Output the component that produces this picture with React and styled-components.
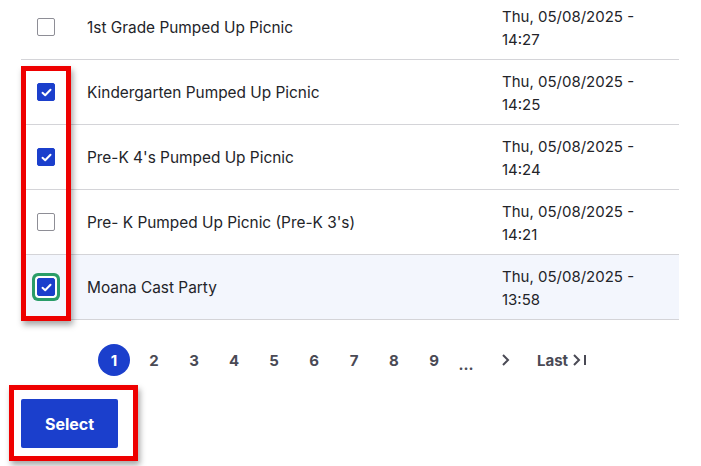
import React from "react";
import styled, { createGlobalStyle } from "styled-components";

const GlobalStyle = createGlobalStyle`
  body {
    margin: 0;
    background: #fff;
    font-family: Inter, "Liberation Sans", Arial, sans-serif;
    color: #232429;
    overflow: hidden;
  }
`;

const Page = styled.div`
  width: 701px;
  height: 466px;
  padding: 0 22px 0 21px;
  box-sizing: border-box;
  overflow: hidden;
`;

const TableWrap = styled.div`
  position: relative;
  margin-top: -5px;
`;

const Row = styled.div`
  display: grid;
  grid-template-columns: 50px 1fr 177px;
  align-items: center;
  height: 65px;
  border-bottom: 1px solid #d4d4d8;
  box-sizing: border-box;
  background: ${({ $active }) => ($active ? "#f3f6fd" : "#fff")};
`;

const CheckCell = styled.div`
  display: flex;
  justify-content: center;
`;

const Box = styled.span`
  display: flex;
  align-items: center;
  justify-content: center;
  width: 18px;
  height: 18px;
  box-sizing: border-box;
  border-radius: 2px;
  border: 1px solid ${({ $checked }) => ($checked ? "#1b3fcc" : "#8e8e96")};
  background: ${({ $checked }) => ($checked ? "#1b3fcc" : "#fff")};
  box-shadow: ${({ $focus }) => ($focus ? "0 0 0 2px #fff, 0 0 0 5px #2a9d68" : "none")};
`;

const Title = styled.div`
  padding: 1px 0 0 16px;
  font-size: 15.4px;
  line-height: 22px;
`;

const DateCell = styled.div`
  font-size: 15px;
  line-height: 23px;
  padding-top: 2px;
`;

const Highlight = styled.div`
  position: absolute;
  left: 0;
  top: 71px;
  width: 50px;
  height: 255px;
  box-sizing: border-box;
  border: 5px solid #ee0000;
  box-shadow: 2px 4px 6px rgba(0, 0, 0, 0.35);
  pointer-events: none;
`;

const Pager = styled.nav`
  display: flex;
  align-items: center;
  gap: 8px;
  margin: 24px 0 0 77px;
  height: 32px;
`;

const PageItem = styled.span`
  display: flex;
  align-items: center;
  justify-content: center;
  width: 32px;
  height: 32px;
  border-radius: 50%;
  font-size: 15px;
  font-weight: 700;
  color: ${({ $current }) => ($current ? "#fff" : "#4a4a55")};
  background: ${({ $current }) => ($current ? "#1b3fcc" : "transparent")};
`;

const Dots = styled(PageItem)`
  width: 16px;
  align-items: flex-end;
  padding-bottom: 2px;
  box-sizing: border-box;
`;

const NextItem = styled(PageItem)`
  margin-left: 7px;
`;

const LastLink = styled.span`
  display: flex;
  align-items: center;
  gap: 5px;
  margin-left: 8px;
  font-size: 15px;
  font-weight: 700;
  color: #4a4a55;
`;

const ButtonArea = styled.div`
  position: relative;
  margin-top: 23px;
`;

const Button = styled.button`
  width: 97px;
  height: 49px;
  border: none;
  border-radius: 2px;
  background: #1b3fcc;
  color: #fff;
  font-family: Inter, "Liberation Sans", Arial, sans-serif;
  font-size: 16px;
  font-weight: 700;
  cursor: pointer;
`;

const ButtonFrame = styled.div`
  position: absolute;
  left: -12px;
  top: -14px;
  width: 129px;
  height: 76px;
  box-sizing: border-box;
  border: 5px solid #ee0000;
  box-shadow: 2px 4px 6px rgba(0, 0, 0, 0.35);
  pointer-events: none;
`;

const Check = () => (
  <svg width="11" height="9" viewBox="0 0 11 9">
    <polyline points="1.5,4.8 4.2,7.2 9.5,1.8" fill="none" stroke="#fff" strokeWidth="2" strokeLinecap="round" strokeLinejoin="round" />
  </svg>
);

const Chevron = () => (
  <svg width="9" height="14" viewBox="0 0 9 14">
    <polyline points="2,2 7,7 2,12" fill="none" stroke="#4a4a55" strokeWidth="2" />
  </svg>
);

const rows = [
  { title: "1st Grade Pumped Up Picnic", time: "14:27", checked: false },
  { title: "Kindergarten Pumped Up Picnic", time: "14:25", checked: true },
  { title: "Pre-K 4's Pumped Up Picnic", time: "14:24", checked: true },
  { title: "Pre- K Pumped Up Picnic (Pre-K 3's)", time: "14:21", checked: false },
  { title: "Moana Cast Party", time: "13:58", checked: true, active: true },
];

export default function App() {
  return (
    <Page>
      <GlobalStyle />
      <TableWrap>
        {rows.map((r) => (
          <Row key={r.title} $active={r.active}>
            <CheckCell>
              <Box $checked={r.checked} $focus={r.active}>
                {r.checked && <Check />}
              </Box>
            </CheckCell>
            <Title>{r.title}</Title>
            <DateCell>
              Thu, 05/08/2025 -<br />
              {r.time}
            </DateCell>
          </Row>
        ))}
        <Highlight />
      </TableWrap>
      <Pager>
        <PageItem $current>1</PageItem>
        {[2, 3, 4, 5, 6, 7, 8, 9].map((n) => (
          <PageItem key={n}>{n}</PageItem>
        ))}
        <Dots>…</Dots>
        <NextItem>
          <Chevron />
        </NextItem>
        <LastLink>
          Last
          <svg width="14" height="14" viewBox="0 0 14 14">
            <polyline points="1,2 6,7 1,12" fill="none" stroke="#4a4a55" strokeWidth="2" />
            <line x1="12" y1="2" x2="12" y2="12" stroke="#4a4a55" strokeWidth="2" />
          </svg>
        </LastLink>
      </Pager>
      <ButtonArea>
        <Button>Select</Button>
        <ButtonFrame />
      </ButtonArea>
    </Page>
  );
}
